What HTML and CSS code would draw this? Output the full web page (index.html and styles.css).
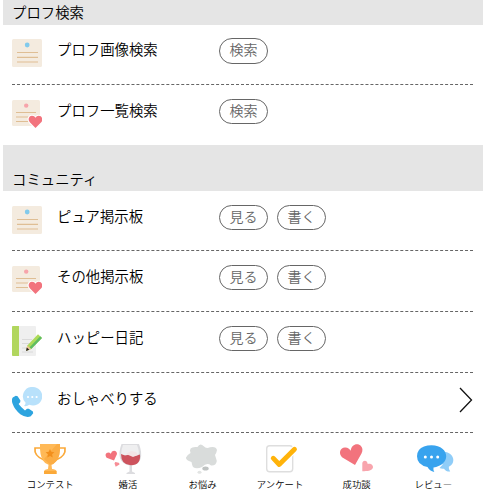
FILE: index.html
```html
<!DOCTYPE html>
<html lang="ja">
<head>
<meta charset="utf-8">
<title>メニュー</title>
<link rel="stylesheet" href="styles.css">
</head>
<body>
<svg width="0" height="0" class="defs">
  <symbol id="note" viewBox="0 0 30 30">
    <rect width="30" height="28" rx="1.5" fill="#f4ebdf"/>
    <circle cx="15.2" cy="6" r="2.4" fill="#82caec"/>
    <path d="M5 13.5H26M5 18.4H26M5 23H26" stroke="#dfbe94" stroke-width="1.2"/>
  </symbol>
  <symbol id="note-heart" viewBox="0 0 30 30">
    <rect width="28" height="26" rx="1.5" fill="#f4ebdf"/>
    <circle cx="14.2" cy="5.6" r="2.2" fill="#f7a4ab"/>
    <path d="M4 12.5H24M4 17H20M4 21.5H17" stroke="#dfbe94" stroke-width="1.2"/>
    <path d="M23.5 28 17.8 22.2C15.4 19.4 17 15.8 20 15.8c1.7 0 2.8.8 3.5 2 .7-1.2 1.8-2 3.3-2 3 0 4.8 3.6 2.4 6.4Z" fill="#f2737d" stroke="#fff" stroke-width="2.2" paint-order="stroke"/>
  </symbol>
</svg>
<main class="menu">
  <h2 class="heading">プロフ検索</h2>
  <section>
    <div class="row first"><svg class="icon"><use href="#note"/></svg><span class="label">プロフ画像検索</span><a class="btn">検索</a></div>
    <div class="row last"><svg class="icon"><use href="#note-heart"/></svg><span class="label">プロフ一覧検索</span><a class="btn">検索</a></div>
  </section>
  <h2 class="heading tall">コミュニティ</h2>
  <section>
    <div class="row"><svg class="icon"><use href="#note"/></svg><span class="label">ピュア掲示板</span><a class="btn">見る</a><a class="btn">書く</a></div>
    <div class="row loose"><svg class="icon"><use href="#note-heart"/></svg><span class="label">その他掲示板</span><a class="btn">見る</a><a class="btn">書く</a></div>
    <div class="row loose diary">
      <svg class="icon" viewBox="0 0 30 30">
        <rect width="24" height="30" rx="1" fill="#efefef"/><path d="M1 0H7V30H1Q0 30 0 29V1Q0 0 1 0Z" fill="#b1d65e"/>
        <path d="M10 13.5H20M10 17.5H18M10 22H14M10 26H21" stroke="#dadada"/>
        <path d="M14 25 15.3 19.5 26 8.3 30 12 19.2 23Z" fill="#aedb59"/><path d="M17.4 21.5 28.2 10.3 30 12 19.2 23Z" fill="#5fbd63"/>
        <path d="M14 25 15.3 19.5 19.2 23Z" fill="#edc29a"/><path d="M14 25 14.8 21.4 17.3 23.8Z" fill="#222"/>
      </svg>
      <span class="label">ハッピー日記</span><a class="btn">見る</a><a class="btn">書く</a></div>
    <div class="row talk">
      <svg class="icon" viewBox="0 0 30 30">
        <path d="M21 0a9.3 9.3 0 1 1-3.8 17.8Q15 19.6 12 19q1.6-1.5 1.6-3.2A9.3 9.3 0 0 1 21 0Z" fill="#b8e1fb"/>
        <circle cx="16" cy="10" r="1.1" fill="#fff"/><circle cx="20.3" cy="10" r="1.1" fill="#fff"/><circle cx="24.6" cy="10" r="1.1" fill="#fff"/>
        <path d="M.8 10.6 3.8 8.8 5.6 9.3 8.4 13.6 8.2 15.2 6.6 17Q9.4 20.8 13 23.4L15 21.8 16.8 21.8 20.9 24.6 21.2 26.3 18.8 29.2Q14.5 31.4 8.3 27.2 2.6 22.5.7 17-.9 12.8.8 10.6Z" fill="#2da4df"/>
      </svg>
      <span class="label">おしゃべりする</span>
      <svg class="arrow" viewBox="0 0 14 26"><path d="M1 1 12.5 13 1 25" fill="none" stroke="#111" stroke-width="1.3"/></svg>
    </div>
  </section>
  <nav class="tabs">
    <a class="tab"><svg viewBox="0 0 40 32">
      <path d="M12 5H5Q3.8 13 14 17M28 5H35Q36.2 13 26 17" fill="none" stroke="#fba939" stroke-width="1.7"/>
      <path d="M10 1H30Q30.5 14 26 18.5 23.5 21.5 21.5 21.8L22 26Q26 26.5 26.5 28V31H14V28Q14.5 26.5 18 26L18.5 21.8Q15 21 13 17.5 9.5 12 10 1Z" fill="#ffb957"/>
      <path d="M30 1Q30.5 14 26 18.5 23.5 21.5 20 21.8L14 16 27 1Z" fill="#fbad45"/><rect x="14" y="28" width="12.5" height="3" fill="#fba939"/>
      <path d="m20 6 1.3 2.8 3.1.4-2.3 2.1.6 3.1-2.7-1.5-2.7 1.5.6-3.1-2.3-2.1 3.1-.4Z" fill="#f28f1c"/>
    </svg><span>コンテスト</span></a>
    <a class="tab wine"><svg viewBox="0 0 40 32">
      <path d="M14.5 1H32Q35.5 10 33.5 16 31.5 21.5 25 22.5V28.5L28 30V31H19.5V30L22.5 28.5V22.5Q15 21 13 15 11.5 9 14.5 1Z" fill="#dcdcdf"/>
      <path d="M16 2H30Q32.5 8 31.5 12H14.2Q14 7 16 2Z" fill="#efeff0"/>
      <path d="M14 11 18 12.5 23 11.5 28 13 33 11.5Q34 22 23.8 22.3 14 21.8 14 11Z" fill="#cd535d"/><path d="m19 11 5-3 5 1 2 3-5 2Z" fill="#f3e4e5"/>
      <path d="M7 17.5-.4 14.8Q-2.5 11.8-.4 10 2 8.6 3.8 10.8 4.5 7.9 7 7.8 10 8 10 11Z" fill="#f2737d"/>
      <path d="M8.7 23.8 7.5 20.4Q8.2 18.2 10.3 19.6 12.6 19.3 12.5 21.5Z" fill="#f78d96"/>
    </svg><span>婚活</span></a>
    <a class="tab worry"><svg viewBox="0 0 40 32">
      <path d="M15.5 4Q18-.7 21.8 3.2 24 6 28 4.3 34 3 35 7 34.5 10 33 12 34 15 34.8 18 34 23 29 22.5 25 19 20 24 14.5 26.5 11 24 10 22 9.5 19 3.5 17 4 14.5 5 12 8.5 10 6 3 15.5 4Z" fill="#d9dcdb"/>
      <ellipse cx="23.5" cy="25.5" rx="3.2" ry="2.1" fill="#bfc3c2"/><ellipse cx="17.5" cy="29.3" rx="2" ry="1.5" fill="#e2e4e3"/>
    </svg><span>お悩み</span></a>
    <a class="tab"><svg viewBox="0 0 40 32">
      <rect x="6.7" y="2.8" width="26" height="26" rx="3" fill="#fff" stroke="#dedede" stroke-width="1.4"/>
      <path d="M13.2 15.2 19.2 21.5 34.5 6.3" fill="none" stroke="#fff" stroke-width="7" stroke-linecap="round"/>
      <path d="M13.2 15.2 19.2 21.5 34.5 6.3" fill="none" stroke="#ffb30a" stroke-width="4.8" stroke-linecap="round" stroke-linejoin="round"/>
    </svg><span>アンケート</span></a>
    <a class="tab"><svg viewBox="0 0 40 32">
      <path d="M18 22 5 14.2C.9 10 3.7 4 8.5 4.6 10.9 4.8 12.5 6 13.7 7.7 14.3 1.5 20 -.5 23.5 2.5 25.7 4.4 26.1 7.5 24.5 10.5Z" fill="#f2737d"/>
      <path d="M25.3 28.3V20C26.3 16.4 30.5 17.3 30.7 21 33.7 19.6 37.1 22.5 35.7 25.3 34.5 27.7 30.5 28.3 25.3 28.3Z" fill="#f8a5ad"/>
    </svg><span>成功談</span></a>
    <a class="tab"><svg viewBox="0 0 40 32">
      <path d="M31 8.7C41.5 9.7 43.3 20.3 35.8 23.8Q35.5 26.5 37.2 28.6 33 28.8 31 25.7 28.7 26.1 26.5 25 33 20 31 8.7Z" fill="#90cdf8"/>
      <path d="M18.5 2.2C28 2.2 33.2 7.5 33.2 13.3 33.2 19 28 23.6 20.5 24.4Q20 27 21.3 29 16.5 27.8 14.5 24 4 22 4 13.3 4.2 6 11 3.6 14.4 2.2 18.5 2.2Z" fill="#38a3ee"/>
      <circle cx="12.3" cy="14" r="1.5" fill="#fff"/><circle cx="18.5" cy="14" r="1.5" fill="#fff"/><circle cx="24.7" cy="14" r="1.5" fill="#fff"/>
    </svg><span>レビュ<i>ー</i></span></a>
  </nav>
</main>
</body>
</html>
```
FILE: styles.css
```css
* { box-sizing: border-box; }
body { margin: 0; background: #fff; color: #000; font: 350 14.4px/24px "Noto Sans CJK JP", sans-serif; overflow: hidden; }
.defs { display: block; height: 0; }
.menu { width: 480px; margin-left: 3px; }
.heading { margin: 0; height: 25px; padding: 0 9px; background: #e5e5e5; font-size: 14.4px; font-weight: 350; }
.heading.tall { height: 46px; padding-top: 22px; }
.row { display: flex; align-items: flex-start; height: 60px; margin: 0 10px 0 9px; padding-top: 14px; border-bottom: 1px dashed #666; }
.row.first { padding-top: 13px; }
.row.last { border-bottom: 0; }
.row.loose { height: 61px; }
.icon { width: 30px; height: 30px; margin-top: 1px; flex: none; }
.diary .icon { margin-top: 0; }
.label { width: 162px; margin-left: 15px; line-height: 21px; }
.btn { width: 49px; height: 25px; margin-right: 9px; border: 1px solid #666; border-radius: 13px; color: #666; font-size: 14px; line-height: 20px; text-align: center; }
.first .btn { height: 26px; }
.arrow { width: 14px; height: 26px; margin-left: auto; }
.talk .icon { margin-top: 0; }
.talk .label { line-height: 22px; }
.tabs { display: grid; grid-template-columns: repeat(6, 76.6px); margin-left: 9px; padding-top: 10px; }
.tab { display: flex; flex-direction: column; align-items: center; font-size: 9.4px; line-height: 14px; color: #000; }
.tab svg { width: 40px; height: 32px; overflow: visible; }
.tab span { margin-top: 2px; }
.tab i { font-style: normal; color: #999; }
.wine span { padding-left: 2px; }
.worry { padding-right: 2px; }
```
